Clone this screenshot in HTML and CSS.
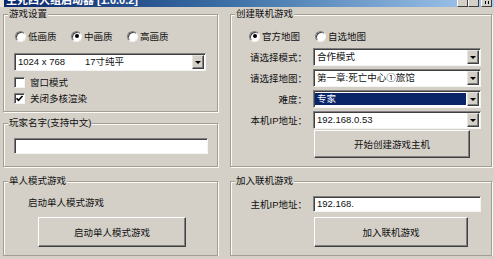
FILE: index.html
```html
<!DOCTYPE html>
<html lang="zh-CN">
<head>
    <meta charset="UTF-8">
    <title>生死四人组启动器</title>
    <link rel="stylesheet" href="styles.css">
</head>
<body>
<div class="titlebar">
    <span class="app-icon"></span>
    <span class="title">生死四人组启动器 [1.0.0.2]</span>
    <span class="caption-btns">
        <span class="cap-btn"></span>
        <span class="cap-btn"></span>
        <span class="cap-btn close"></span>
    </span>
</div>

<div class="client">
    <div class="col col-left">
        <fieldset class="group settings">
            <legend>游戏设置</legend>
            <div class="radio-row">
                <label class="radio"><span class="radio-dot"></span>低画质</label>
                <label class="radio"><span class="radio-dot on"></span>中画质</label>
                <label class="radio"><span class="radio-dot"></span>高画质</label>
            </div>
            <div class="combo res-combo">
                <span class="combo-text">1024 x 768<span class="gap"></span>17寸纯平</span>
                <span class="combo-btn"></span>
            </div>
            <label class="check first"><span class="check-box"></span>窗口模式</label>
            <label class="check">
                <span class="check-box">
                    <svg width="9" height="9" viewBox="0 0 9 9"><path d="M1.5 4.2 L3.5 6.3 L7.5 2" fill="none" stroke="#000" stroke-width="1.6"/></svg>
                </span>关闭多核渲染
            </label>
        </fieldset>

        <fieldset class="group player">
            <legend>玩家名字(支持中文)</legend>
            <div class="textbox name-box"></div>
        </fieldset>

        <fieldset class="group single">
            <legend>单人模式游戏</legend>
            <div class="single-label">启动单人模式游戏</div>
            <div class="button single-btn">启动单人模式游戏</div>
        </fieldset>
    </div>

    <div class="col col-right">
        <fieldset class="group host">
            <legend>创建联机游戏</legend>
            <div class="radio-row">
                <label class="radio map-radio"><span class="radio-dot on"></span>官方地图</label>
                <label class="radio map-radio"><span class="radio-dot"></span>自选地图</label>
            </div>
            <div class="form-grid">
                <span class="form-label">请选择模式：</span>
                <div class="combo"><span class="combo-text">合作模式</span><span class="combo-btn"></span></div>
                <span class="form-label">请选择地图：</span>
                <div class="combo"><span class="combo-text">第一章:死亡中心①旅馆</span><span class="combo-btn"></span></div>
                <span class="form-label">难度：</span>
                <div class="combo"><span class="combo-text selected">专家</span><span class="combo-btn"></span></div>
                <span class="form-label">本机IP地址：</span>
                <div class="combo"><span class="combo-text">192.168.0.53</span><span class="combo-btn"></span></div>
            </div>
            <div class="button host-btn">开始创建游戏主机</div>
        </fieldset>

        <fieldset class="group join">
            <legend>加入联机游戏</legend>
            <div class="form-grid join-grid">
                <span class="form-label">主机IP地址：</span>
                <div class="textbox ip-box">192.168.</div>
            </div>
            <div class="button join-btn">加入联机游戏</div>
        </fieldset>
    </div>
</div>
</body>
</html>
```

FILE: styles.css
```css
body {
    margin: 0;
    background-color: #d4d0c8;
    font-family: "Liberation Sans", "Noto Sans CJK SC", sans-serif;
    font-size: 9.5px;
    color: #111;
    overflow: hidden;
}

*,
*::before,
*::after {
    box-sizing: border-box;
}

/* window caption, mostly cut off at the top of the shot */
.titlebar {
    height: 7px;
    display: flex;
    align-items: flex-end;
    overflow: hidden;
    background: linear-gradient(to right, #0a246a 0%, #3a6ea5 45%, #a6caf0 100%);
}

.app-icon {
    width: 4px;
    height: 12px;
    margin-right: 2px;
    background: #e8e4d8;
}

.title {
    color: #fff;
    font-weight: bold;
    font-size: 11px;
    line-height: 13px;
    white-space: nowrap;
}

.caption-btns {
    display: flex;
    margin-left: auto;
    margin-right: 2px;
}

.cap-btn {
    width: 11px;
    height: 12px;
    background: #d4d0c8;
    border: 1px solid;
    border-color: #fff #404040 #404040 #fff;
    position: relative;
}

.cap-btn.close {
    margin-left: 2px;
}

.cap-btn.close::after {
    content: "";
    position: absolute;
    left: 3px;
    bottom: 2px;
    width: 4px;
    height: 3px;
    border-left: 1px solid #000;
    border-right: 1px solid #000;
}

.client {
    display: flex;
    gap: 12px;
    padding-left: 3px;
}

.col {
    display: flex;
    flex-direction: column;
}

.col-left {
    width: 215px;
}

.col-right {
    width: 262px;
}

/* etched group boxes */
.group {
    margin: 0;
    padding: 0 0 0 10px;
    min-width: 0;
    border: 1px solid #a19e96;
    box-shadow: inset 1px 1px 0 #fbfaf7, 1px 1px 0 #fbfaf7;
}

.group legend {
    margin-left: -6px;
    padding: 0 1px;
    line-height: 14px;
    background: #d4d0c8;
}

.settings {
    padding-top: 8px;
    padding-bottom: 6px;
}

.player {
    margin-top: 4px;
    padding-top: 8px;
    padding-bottom: 12px;
}

.single {
    margin-top: 7px;
    padding-top: 4px;
    padding-bottom: 8px;
}

.host {
    padding: 8px 10px 8px 17px;
}

.host legend {
    margin-left: -13px;
}

.join {
    margin-top: 7px;
    padding: 4px 10px 8px 17px;
}

.join legend {
    margin-left: -13px;
}

/* radios and checkboxes */
.radio-row {
    display: flex;
    height: 14px;
    align-items: center;
    padding-left: 1px;
}

.radio {
    width: 56px;
    display: flex;
    align-items: center;
    gap: 2px;
    white-space: nowrap;
}

.map-radio {
    width: 66px;
}

.radio-dot {
    width: 11px;
    height: 11px;
    border-radius: 50%;
    background: #fff;
    border: 1px solid;
    border-color: #808080 #f4f4f4 #f4f4f4 #808080;
    box-shadow: inset 1px 1px 0 #404040;
    display: flex;
    align-items: center;
    justify-content: center;
}

.radio-dot.on::after {
    content: "";
    width: 4px;
    height: 4px;
    border-radius: 50%;
    background: #000;
}

.check {
    display: flex;
    align-items: center;
    gap: 5px;
    height: 14px;
    margin-top: 2px;
}

.check.first {
    margin-top: 4px;
}

.check-box {
    width: 11px;
    height: 11px;
    background: #fff;
    border: 1px solid;
    border-color: #808080 #f4f4f4 #f4f4f4 #808080;
    box-shadow: inset 1px 1px 0 #404040;
    display: flex;
    align-items: center;
    justify-content: center;
}

/* combo boxes and text fields */
.combo,
.textbox {
    background: #fff;
    border: 1px solid;
    border-color: #808080 #f4f4f4 #f4f4f4 #808080;
    box-shadow: inset 1px 1px 0 #404040;
}

.combo {
    display: flex;
    height: 18px;
    padding: 1px 1px 1px 1px;
}

.res-combo {
    width: 192px;
    margin-top: 10px;
}

.combo-text {
    flex: 1;
    padding-left: 2px;
    line-height: 14px;
    white-space: nowrap;
    overflow: hidden;
}

.combo-text .gap {
    display: inline-block;
    width: 20px;
}

.combo-text.selected {
    margin: 1px 1px 1px 0;
    line-height: 12px;
    background: #0a246a;
    color: #fff;
}

.combo-btn {
    width: 12px;
    background: #d4d0c8;
    border: 1px solid;
    border-color: #e8e6e0 #404040 #404040 #e8e6e0;
    box-shadow: inset -1px -1px 0 #808080;
    display: flex;
    align-items: center;
    justify-content: center;
}

.combo-btn::after {
    content: "";
    border-left: 3px solid transparent;
    border-right: 3px solid transparent;
    border-top: 3px solid #000;
}

.textbox {
    height: 16px;
    padding-left: 3px;
    line-height: 14px;
}

.name-box {
    width: 194px;
}

.form-grid {
    display: grid;
    grid-template-columns: 1fr 168px;
    grid-auto-rows: 18px;
    column-gap: 6px;
    row-gap: 3px;
    margin-top: 5px;
}

.join-grid {
    grid-auto-rows: 16px;
    margin-top: 4px;
}

.form-label {
    align-self: center;
    text-align: right;
    white-space: nowrap;
}

/* push buttons */
.button {
    display: flex;
    align-items: center;
    justify-content: center;
    background: #d4d0c8;
    border: 1px solid;
    border-color: #fff #404040 #404040 #fff;
    box-shadow: inset -1px -1px 0 #808080;
}

.single-label {
    margin-top: 4px;
    padding-left: 14px;
    line-height: 14px;
}

.single-btn {
    width: 148px;
    height: 30px;
    margin: 7px 0 0 24px;
}

.host-btn {
    width: 156px;
    height: 28px;
    margin: 1px 0 0 66px;
}

.join-btn {
    width: 154px;
    height: 30px;
    margin: 5px 0 0 66px;
}
```
